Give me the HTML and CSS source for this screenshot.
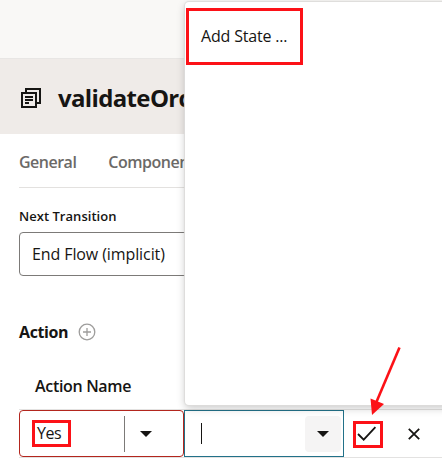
FILE: index.html
```html
<!DOCTYPE html>
<html lang="en">
<head>
<meta charset="utf-8">
<title>validateOrder</title>
<link rel="stylesheet" href="styles.css">
</head>
<body>
<div class="topbar"></div>
<header class="header">
  <svg class="state-icon" width="20" height="20" viewBox="0 0 20 20" fill="none" stroke="#161513" stroke-width="2"><path d="M5 4V1h14v14h-3M1 5h14v14H1zM4 9h8M4 12h8M4 15h4"/></svg>
  <h1 class="title">validateOrder</h1>
</header>
<nav class="tabs"><span class="tab">General</span><span class="tab">Component</span></nav>
<main class="content">
  <label class="label">Next Transition</label>
  <div class="select">End Flow (implicit)</div>
  <div class="section"><h2 class="section-title">Action</h2>
    <svg width="18" height="18" viewBox="0 0 18 18" fill="none" stroke="#9e9d9c" stroke-width="1.3"><circle cx="9" cy="9" r="7.8"/><path d="M9 5v8M5 9h8"/></svg>
  </div>
  <div class="column-name">Action Name</div>
</main>
<div class="row">
  <div class="name-field">
    <span class="yes">Yes</span>
    <span class="toggle"><svg width="12" height="6" viewBox="0 0 12 6"><path fill="#161513" d="M0 0h12L6 6z"/></svg></span>
  </div>
  <div class="state-field">
    <span class="cursor"></span>
    <span class="drop"><svg width="12" height="6" viewBox="0 0 12 6"><path fill="#161513" d="M0 0h12L6 6z"/></svg></span>
  </div>
  <div class="confirm"><svg width="20" height="16" viewBox="0 0 20 16" fill="none" stroke="#161513" stroke-width="1.8"><path d="M1 8l5.7 5.6L18.4 1.2"/></svg></div>
  <svg class="cancel" width="12" height="12" viewBox="0 0 12 12" stroke="#161513" stroke-width="1.8"><path d="M.8.8l10.4 10.4M11.2.8L.8 11.2"/></svg>
</div>
<div class="popup"><div class="option"><span>Add State ...</span></div></div>
<svg class="arrow" width="34" height="72" viewBox="0 0 34 72"><path d="M30.5 2.5L7 58" stroke="#fc1117" stroke-width="2.6"/><path fill="#fc1117" d="M1.5 53.5L15 59 3 70z"/></svg>
</body>
</html>
```
FILE: styles.css
```css
* { box-sizing: border-box; }
body { margin: 0; width: 442px; height: 464px; overflow: hidden; position: relative; background: #fff; color: #161513; font: 16px/20px "Open Sans", sans-serif; }
svg { display: block; flex: none; }
.topbar { height: 59px; background: #f9f8f6; border-bottom: 1px solid #e8e6e4; }
.header { height: 75px; background: #efebe8; display: flex; align-items: center; padding: 3px 0 0 21px; gap: 17px; }
.title { margin: 0; font-size: 24px; line-height: 30px; font-weight: 700; letter-spacing: -0.65px; }
.tabs { height: 54px; margin-left: 19px; border-bottom: 1px solid #e3e1df; display: flex; gap: 32px; padding-top: 18px; color: #6b6967; font-weight: 600; letter-spacing: -0.5px; }
.content { padding: 20px 0 0 19px; height: 221px; }
.label { display: block; font-size: 13px; line-height: 16px; font-weight: 600; letter-spacing: 0.03px; }
.select { height: 44px; width: 300px; margin-top: 8px; border: 1px solid #7c7a78; border-radius: 4px; padding: 11px 12px; letter-spacing: -0.1px; }
.section { display: flex; align-items: center; gap: 10px; margin-top: 46px; height: 20px; }
.section-title { font-size: 16px; margin: 0; width: 49px; letter-spacing: -0.4px; }
.column-name { margin: 34px 0 0 16px; font-weight: 600; letter-spacing: -0.32px; }
.row { height: 49px; margin-left: 19px; border: solid #e3e2e1; border-width: 1px 0; display: flex; align-items: center; }
.name-field { width: 165px; height: 47px; border: 1px solid #b3261e; border-radius: 4px; display: flex; align-items: center; padding-left: 12px; }
.yes { width: 39px; height: 27px; border: 3px solid #fc1117; padding-left: 2px; letter-spacing: -0.5px; line-height: 21px; }
.toggle { height: 36px; margin-left: 53px; border-left: 1px solid #7c7a78; display: flex; align-items: center; padding-left: 15px; }
.state-field { width: 160px; height: 47px; border: 1px solid #227189; display: flex; align-items: center; justify-content: space-between; padding: 0 2px 0 16px; background: #fff; }
.cursor { width: 1px; height: 21px; background: #161513; }
.drop { width: 36px; height: 36px; background: #f5f4f4; border-radius: 4px; display: flex; align-items: center; justify-content: center; }
.confirm { width: 30px; height: 27px; margin: 1px 0 0 9px; border: 3px solid #fc1117; padding: 2px 1px; }
.cancel { margin-left: 25px; }
.popup { position: absolute; left: 185px; top: 2px; width: 265px; height: 403px; background: #fff; border-radius: 4px; box-shadow: 0 0 1px 1px #dddcdb, 0 3px 8px rgba(0,0,0,.22); padding: 6px 1px; }
.option { width: 117px; height: 57px; border: 3px solid #fc1117; padding: 15px 12px; letter-spacing: -0.18px; white-space: nowrap; }
.arrow { position: absolute; left: 369px; top: 345px; }
```
